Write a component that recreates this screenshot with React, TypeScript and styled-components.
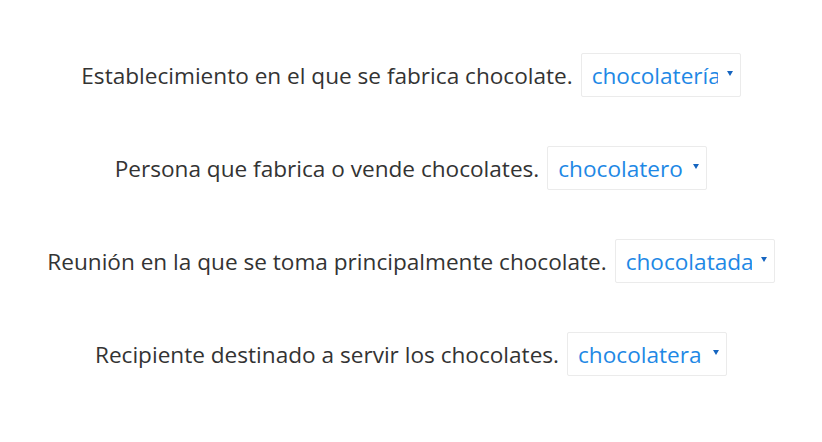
import React from "react";
import styled, { createGlobalStyle } from "styled-components";

const Global = createGlobalStyle`
  html, body { margin: 0; padding: 0; background: #fff; }
  body { font-family: "Open Sans", "Noto Sans", sans-serif; }
`;

const Page = styled.div`
  width: 822px;
  height: 442px;
  display: flex;
  flex-direction: column;
  align-items: center;
  padding-top: 53px;
  gap: 49px;
  box-sizing: border-box;
`;

const Row = styled.div`
  display: flex;
  align-items: center;
  gap: 8px;
  height: 44px;
`;

const Label = styled.span`
  font-size: 22.6px;
  color: #333;
`;

const Select = styled.div`
  position: relative;
  width: 160px;
  height: 44px;
  box-sizing: border-box;
  border: 1px solid #ebebeb;
  border-radius: 2px;
  display: flex;
  align-items: center;
  padding: 0 22px 0 10px;
  overflow: hidden;
`;

const Value = styled.span`
  font-size: 22.6px;
  color: #1e88e5;
  white-space: nowrap;
  overflow: hidden;
`;

const Arrow = styled.span`
  position: absolute;
  right: 7px;
  top: 17px;
  width: 0;
  height: 0;
  border-left: 3px solid transparent;
  border-right: 3px solid transparent;
  border-top: 5px solid #1565c0;
`;

const items = [
  ["Establecimiento en el que se fabrica chocolate.", "chocolatería"],
  ["Persona que fabrica o vende chocolates.", "chocolatero"],
  ["Reunión en la que se toma principalmente chocolate.", "chocolatada"],
  ["Recipiente destinado a servir los chocolates.", "chocolatera"],
];

export default function App() {
  return (
    <>
      <Global />
      <Page>
        {items.map(([label, value]) => (
          <Row key={value}>
            <Label>{label}</Label>
            <Select>
              <Value>{value}</Value>
              <Arrow />
            </Select>
          </Row>
        ))}
      </Page>
    </>
  );
}
